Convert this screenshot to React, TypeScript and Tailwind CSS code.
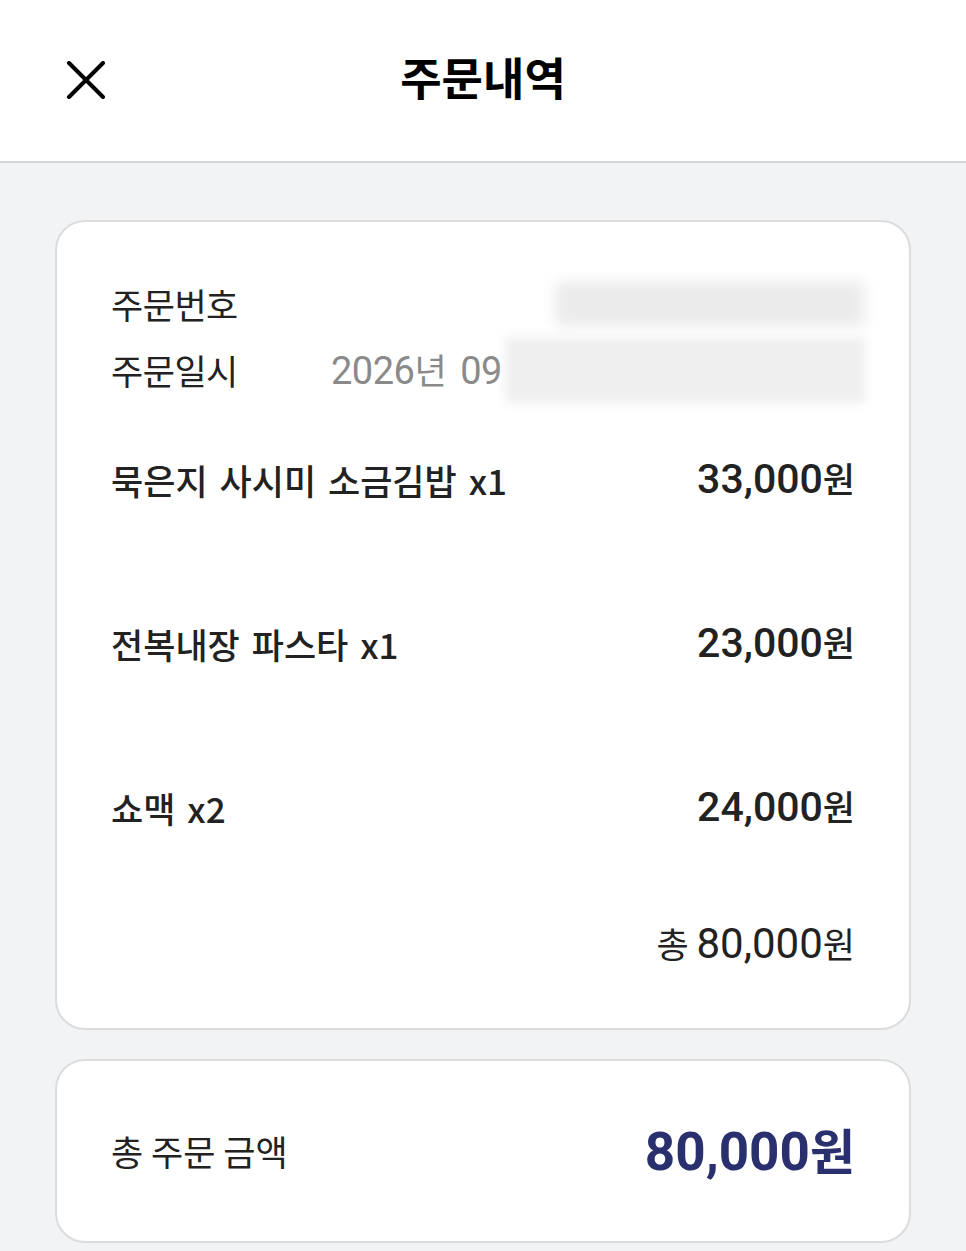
const items = [
  { name: '묵은지 사시미 소금김밥 x1', price: '33,000' },
  { name: '전복내장 파스타 x1', price: '23,000' },
  { name: '쇼맥 x2', price: '24,000' },
];

const kr = { fontFamily: '"Noto Sans CJK KR", "Noto Sans", sans-serif' };
const num = { fontFamily: 'Roboto, "Noto Sans CJK KR", sans-serif' };

export default function App() {
  return (
    <div className="min-h-[1251px] w-[966px] bg-[#f2f3f5] text-[#222]" style={kr}>
      <header className="relative h-[163px] bg-white border-b-2 border-[#d6d6d6] flex items-center justify-center">
        <button className="absolute left-[66px] top-[61px] text-black">
          <svg width="40" height="38" viewBox="0 0 40 38" fill="none" stroke="currentColor" strokeWidth="4" strokeLinecap="round">
            <path d="M3 2 L37 36 M37 2 L3 36" />
          </svg>
        </button>
        <h1 className="text-[45px] font-bold text-black -mt-[8px]">주문내역</h1>
      </header>

      <div className="px-[55px] pt-[57px] flex flex-col gap-[29px]">
        <section className="bg-white border-2 border-[#dcdcdc] rounded-[30px] px-[54px] pt-[50px] pb-[69px]">
          <div className="relative flex items-center h-[64px] text-[35px] tracking-[-0.5px]">
            <span className="w-[220px]">주문번호</span>
            <span className="absolute right-[-10px] top-[10px] w-[310px] h-[44px] bg-[#ebebeb] rounded-[6px] blur-[7px]" />
          </div>
          <div className="relative flex items-center h-[68px] tracking-[-0.5px]">
            <span className="w-[220px] text-[35px]">주문일시</span>
            <span className="text-[#8a8a8a] flex items-baseline leading-none">
              <span className="text-[38px]" style={num}>2026</span>
              <span className="text-[35px]">년</span>
              <span className="text-[38px] ml-[14px]" style={num}>09</span>
            </span>
            <span className="absolute right-[-10px] top-[1px] w-[360px] h-[66px] bg-[#efefef] blur-[5px]" />
          </div>

          <div className="mt-[57px] flex flex-col gap-[128px]">
            {items.map((it) => (
              <div key={it.name} className="flex items-center justify-between font-medium text-[#222] h-[36px]">
                <span className="text-[35px] leading-none [word-spacing:4px]">{it.name}</span>
                <span className="flex items-baseline leading-none">
                  <span className="text-[41px]" style={num}>{it.price}</span>
                  <span className="text-[35px]">원</span>
                </span>
              </div>
            ))}
          </div>

          <div className="mt-[98px] h-[36px] flex items-baseline justify-end leading-none text-[#222]">
            <span className="text-[35px]">총&nbsp;</span>
            <span className="text-[42px]" style={num}>80,000</span>
            <span className="text-[35px]">원</span>
          </div>
        </section>

        <section className="bg-white border-2 border-[#dcdcdc] rounded-[30px] px-[54px] h-[184px] flex items-center justify-between">
          <span className="text-[35px] text-[#222]">총 주문 금액</span>
          <span className="flex items-baseline leading-none font-bold text-[#2a2f6e]">
            <span className="text-[53px]" style={num}>80,000</span>
            <span className="text-[49px]">원</span>
          </span>
        </section>
      </div>
    </div>
  );
}
